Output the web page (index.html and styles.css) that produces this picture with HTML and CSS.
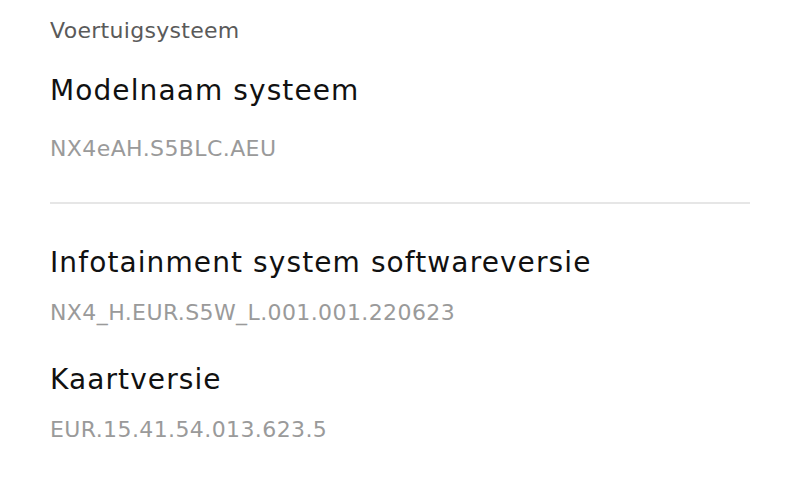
FILE: index.html
```html
<!DOCTYPE html>
<html lang="nl">
<head>
<meta charset="utf-8">
<title>Voertuigsysteem</title>
<link rel="stylesheet" href="styles.css">
</head>
<body>
<main class="page">
  <div class="section-label">Voertuigsysteem</div>
  <div class="item item-first">
    <div class="item-title">Modelnaam systeem</div>
    <div class="item-value">NX4eAH.S5BLC.AEU</div>
  </div>
  <hr class="divider">
  <div class="item item-second">
    <div class="item-title">Infotainment system softwareversie</div>
    <div class="item-value">NX4_H.EUR.S5W_L.001.001.220623</div>
  </div>
  <div class="item">
    <div class="item-title">Kaartversie</div>
    <div class="item-value">EUR.15.41.54.013.623.5</div>
  </div>
</main>
</body>
</html>
```
FILE: styles.css
```css
html, body {
  margin: 0;
  padding: 0;
  background: #ffffff;
}
body {
  font-family: "DejaVu Sans", "Liberation Sans", sans-serif;
  width: 800px;
  height: 483px;
  overflow: hidden;
}
.page {
  padding: 16px 50px 0 50px;
  display: flex;
  flex-direction: column;
}
.section-label {
  font-size: 22px;
  line-height: 30px;
  letter-spacing: 0.3px;
  color: #5a5a5a;
}
.item {
  display: flex;
  flex-direction: column;
  gap: 17px;
  margin-top: 34px;
}
.item-first {
  margin-top: 27px;
  gap: 25px;
}
.item-second {
  margin-top: 41px;
}
.item-title {
  font-size: 28px;
  line-height: 36px;
  letter-spacing: 1.1px;
  color: #111111;
}
.item-value {
  font-size: 22px;
  line-height: 30px;
  letter-spacing: 0.4px;
  color: #9a9a9a;
}
.divider {
  border: none;
  height: 2px;
  background: #e6e6e6;
  margin: 38px 0 0 0;
}
```
